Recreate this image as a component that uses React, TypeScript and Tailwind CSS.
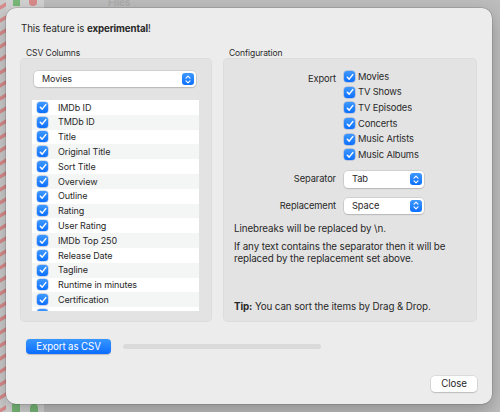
import type { ReactNode } from 'react';

const columns = [
  'IMDb ID',
  'TMDb ID',
  'Title',
  'Original Title',
  'Sort Title',
  'Overview',
  'Outline',
  'Rating',
  'User Rating',
  'IMDb Top 250',
  'Release Date',
  'Tagline',
  'Runtime in minutes',
  'Certification',
  'Genres',
];

const exportTypes = ['Movies', 'TV Shows', 'TV Episodes', 'Concerts', 'Music Artists', 'Music Albums'];

function Checkbox() {
  return (
    <span className="flex h-[11px] w-[11px] shrink-0 items-center justify-center rounded-[3px] bg-gradient-to-b from-[#3d98ff] to-[#0a6fff] shadow-[0_0_0_0.5px_rgba(0,60,180,0.35)]">
      <svg width="8" height="8" viewBox="0 0 8 8" fill="none">
        <path d="M1.3 4.2 L3.2 6.1 L6.8 1.6" stroke="white" strokeWidth="1.5" strokeLinecap="round" strokeLinejoin="round" />
      </svg>
    </span>
  );
}

function Stepper() {
  return (
    <span className="flex h-[12px] w-[12px] items-center justify-center rounded-[3px] bg-gradient-to-b from-[#3d98ff] to-[#0a6fff]">
      <svg width="6" height="9" viewBox="0 0 6 9" fill="none">
        <path d="M1 3.2 L3 1.2 L5 3.2 M1 5.8 L3 7.8 L5 5.8" stroke="white" strokeWidth="1.1" strokeLinecap="round" strokeLinejoin="round" />
      </svg>
    </span>
  );
}

function Popup({ value, className }: { value: string; className: string }) {
  return (
    <div
      className={`flex items-center justify-between rounded-[4px] bg-white pl-[8px] pr-[2px] shadow-[0_0_0_0.5px_rgba(0,0,0,0.16),0_1px_1.5px_rgba(0,0,0,0.12)] ${className}`}
    >
      <span>{value}</span>
      <Stepper />
    </div>
  );
}

function Group({ title, className, children }: { title: string; className: string; children: ReactNode }) {
  return (
    <div className={`flex flex-col ${className}`}>
      <div className="h-[10px] pl-[6px] text-[8.5px] leading-[10px] text-[#2a2a2a]">{title}</div>
      <div className="flex h-[264px] flex-col rounded-[5px] bg-[#e3e3e3] shadow-[inset_0_0_0_0.5px_rgba(0,0,0,0.05)]">
        {children}
      </div>
    </div>
  );
}

export default function App() {
  return (
    <div
      className="relative h-[412px] w-[500px] overflow-hidden bg-[#bdbdbd] text-[9px] tracking-[-0.1px] text-[#282828]"
      style={{ fontFamily: 'Inter, "Noto Sans", "Liberation Sans", sans-serif' }}
    >
      {/* desktop behind the sheet */}
      <div className="absolute left-0 top-0 flex h-full w-[6px] flex-col gap-[9px] bg-[#cbcbcb] pt-[4px]">
        {Array.from({ length: 32 }).map((_, i) => (
          <span key={i} className="block h-[4px] w-[6px] -skew-y-[30deg] bg-[#d98b8b]" />
        ))}
      </div>
      <div className="absolute left-[6px] top-0 h-full w-[38px] bg-[#d2d2d2]" />
      <span className="absolute left-[13px] top-0 h-[6px] w-[7px] bg-[#78b878]" />
      <span className="absolute left-[29px] top-0 h-[6px] w-[8px] rounded-b-full bg-[#d98b8b]" />
      <span className="absolute left-[12px] top-[404px] h-[8px] w-[8px] bg-[#78b878]" />
      <span className="absolute left-[30px] top-[404px] h-[8px] w-[8px] rounded-t-full bg-[#78b878]" />
      <div className="absolute left-[108px] top-0 h-[8px] overflow-hidden">
        <div className="-mt-[4px] text-[10px] font-bold leading-[12px] text-[#acacac]">Files</div>
      </div>

      {/* sheet window */}
      <div className="absolute left-[6px] top-[8px] flex h-[396px] w-[486px] flex-col rounded-[10px] bg-[#ececec] px-[14px] pt-[14px] shadow-[0_0_0_0.5px_rgba(0,0,0,0.22),0_6px_18px_rgba(0,0,0,0.25)]">
        <div className="pl-[1px] text-[9.7px] leading-[13px]">
          This feature is <span className="font-bold">experimental</span>!
        </div>

        <div className="mt-[13px] flex gap-[11px]">
          <Group title="CSV Columns" className="w-[192px]">
            <Popup value="Movies" className="mx-[14px] mt-[13px] h-[16px] w-[162px]" />
            <div className="ml-[12px] mt-[13px] h-[211px] w-[167px] overflow-hidden bg-white">
              {columns.map((c, i) => (
                <div
                  key={c}
                  className={`flex h-[14.8px] items-center gap-[10px] pl-[5px] ${i % 2 === 1 ? 'bg-[#f4f5f5]' : 'bg-white'}`}
                >
                  <Checkbox />
                  <span>{c}</span>
                </div>
              ))}
            </div>
          </Group>

          <Group title="Configuration" className="w-[254px]">
            <div className="grid grid-cols-[113px_1fr] gap-x-[8px] pt-[11px] text-[9.3px]">
              <div className="pt-[2px] text-right leading-[15.6px]">Export</div>
              <div className="flex flex-col">
                {exportTypes.map((t) => (
                  <div key={t} className="flex h-[15.6px] items-center gap-[3px]">
                    <Checkbox />
                    <span>{t}</span>
                  </div>
                ))}
              </div>

              <div className="mt-[8px] flex h-[17px] items-center justify-end">Separator</div>
              <Popup value="Tab" className="mt-[8px] h-[17px] w-[80px]" />

              <div className="mt-[10px] flex h-[16px] items-center justify-end">Replacement</div>
              <Popup value="Space" className="mt-[10px] h-[16px] w-[80px]" />
            </div>

            <div className="mt-[8px] px-[11px] text-[9.8px] leading-[13px]">Linebreaks will be replaced by \n.</div>
            <div className="mt-[6px] px-[11px] text-[9.8px] leading-[12px]">
              If any text contains the separator then it will be
              <br />
              replaced by the replacement set above.
            </div>
            <div className="mt-auto px-[11px] pb-[9px] text-[9.8px] leading-[13px]">
              <span className="font-bold">Tip:</span> You can sort the items by Drag &amp; Drop.
            </div>
          </Group>
        </div>

        <div className="mt-[17px] flex items-center pl-[6px]">
          <button className="h-[15px] w-[85px] rounded-[4px] bg-gradient-to-b from-[#3796ff] to-[#0a6cff] text-[9.7px] leading-[15px] text-white shadow-[0_0.5px_1px_rgba(0,0,0,0.2)]">
            Export as CSV
          </button>
          <div className="ml-[12px] h-[5px] w-[198px] rounded-full bg-[#dadada]" />
        </div>

        <div className="mt-[22px] flex justify-end pr-[1px]">
          <button className="h-[16px] w-[46px] rounded-[4px] bg-white text-[9.7px] leading-[16px] shadow-[0_0_0_0.5px_rgba(0,0,0,0.14),0_1px_1.5px_rgba(0,0,0,0.14)]">
            Close
          </button>
        </div>
      </div>
    </div>
  );
}
